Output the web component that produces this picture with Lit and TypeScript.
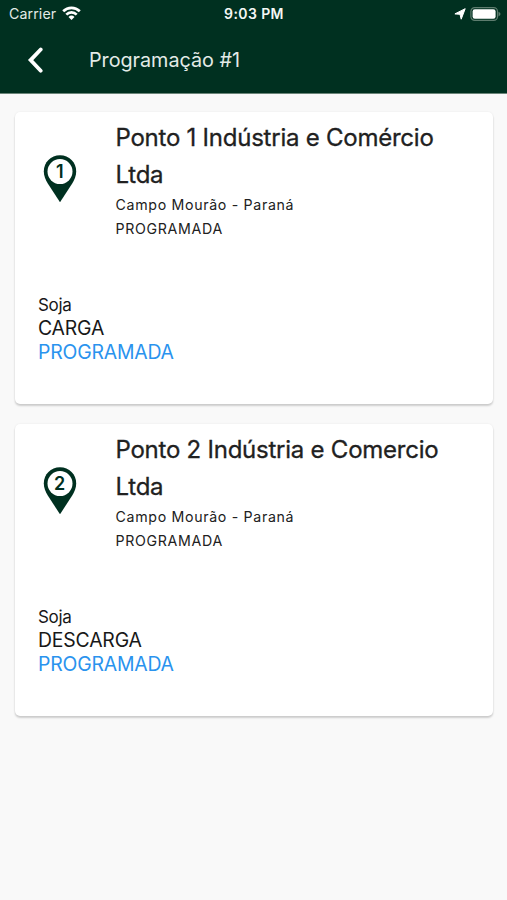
import { LitElement, html, css, svg } from "lit";
import { customElement, property } from "lit/decorators.js";

interface Stop {
  order: number;
  name: string;
  city: string;
  status: string;
  product: string;
  operation: string;
}

const STOPS: Stop[] = [
  { order: 1, name: "Ponto 1 Indústria e Comércio Ltda", city: "Campo Mourão - Paraná", status: "PROGRAMADA", product: "Soja", operation: "CARGA" },
  { order: 2, name: "Ponto 2 Indústria e Comercio Ltda", city: "Campo Mourão - Paraná", status: "PROGRAMADA", product: "Soja", operation: "DESCARGA" },
];

@customElement("status-bar")
class StatusBar extends LitElement {
  static styles = css`
    :host {
      display: grid;
      grid-template-columns: 1fr auto 1fr;
      align-items: center;
      height: 27px;
      padding: 0 6px 0 7px;
      color: #e3ebe7;
    }
    .carrier { display: flex; align-items: center; gap: 5.5px; padding-left: 2px; font-size: 14.2px; letter-spacing: 0.1px; }
    .time { font-size: 14px; font-weight: 600; letter-spacing: 0.4px; color: #f4f7f5; }
    .right { display: flex; align-items: center; justify-content: flex-end; gap: 4px; }
    svg { display: block; }
    .wifi { margin-top: -1px; }
  `;
  render() {
    return html`
      <div class="carrier">
        <span>Carrier</span>
        <svg class="wifi" width="19" height="14" viewBox="0 0 19 14" fill="none" stroke="#fff" stroke-width="2.7">
          <path d="M1.2 5.2a11.8 11.8 0 0 1 16.6 0"></path>
          <path d="M4.3 8.6a7.4 7.4 0 0 1 10.4 0"></path>
          <path d="M9.5 13.9 6.5 10.9a4.3 4.3 0 0 1 6 0z" fill="#fff" stroke="none"></path>
        </svg>
      </div>
      <div class="time">9:03 PM</div>
      <div class="right">
        <svg width="12" height="12" viewBox="0 0 12 12"><path d="M11.2.7 7.2 11.2 6 6.300.9 5.900Z" fill="#fff" stroke="#fff" stroke-width="1" stroke-linejoin="round"></path></svg>
        <svg width="31" height="14" viewBox="0 0 31 14">
          <rect x=".9" y=".6" width="26.6" height="12.8" rx="3.8" fill="none" stroke="#5d7c6e" stroke-width="1.2"></rect>
          <rect x="2.6" y="2.2" width="23" height="9.6" rx="2.2" fill="#fff"></rect>
          <path d="M28.5 4.8q2 .8 2 2.3t-2 2.3z" fill="#5d7c6e"></path>
        </svg>
      </div>
    `;
  }
}

@customElement("app-bar")
class AppBar extends LitElement {
  static styles = css`
    :host { display: flex; align-items: center; height: 66px; padding-left: 27px; color: #e3ebe7; }
    svg { display: block; margin-right: 45px; }
    .title { font-size: 19.8px; line-height: 26px; letter-spacing: -0.03px; }
  `;
  @property() heading = "";
  render() {
    return html`
      <svg width="17" height="26" viewBox="0 0 17 26" fill="none" stroke="#fff" stroke-width="3.8" stroke-linecap="round" stroke-linejoin="miter">
        <path d="M13.7 2.5 3.6 13.1 13.7 23.7"></path>
      </svg>
      <div class="title">${this.heading}</div>
    `;
  }
}

@customElement("stop-card")
class StopCard extends LitElement {
  static styles = css`
    :host {
      display: block;
      box-sizing: border-box;
      height: 292px;
      border-radius: 5px;
      background: #fff;
      box-shadow: 0 2px 2px rgba(0, 0, 0, 0.17), 0 0 2px rgba(0, 0, 0, 0.08);
    }
    .head { display: flex; height: 182px; padding: 8px 23px 0 28px; box-sizing: border-box; }
    .pin { display: block; flex: none; margin: 35px 38.5px 0 0; }
    .num { font: 600 18px Inter, sans-serif; fill: #003020; text-anchor: middle; }
    .name {
      font-size: 24px;
      line-height: 36.5px;
      color: #212121;
      letter-spacing: -0.24px;
      -webkit-text-stroke: 0.3px #212121;
    }
    .sub { font-size: 14.2px; line-height: 24.3px; color: #212121; letter-spacing: 0.67px; }
    .cargo { padding-left: 23px; color: #181818; }
    .product { font-size: 17px; line-height: 22px; letter-spacing: -0.3px; }
    .op { font-size: 19.4px; line-height: 24px; letter-spacing: -0.18px; }
    .blue { color: #2a93ee; }
  `;
  @property({ attribute: false }) stop!: Stop;
  render() {
    const s = this.stop;
    return html`
      <div class="head">
        <svg class="pin" width="34" height="48" viewBox="0 0 34 48">
          <path d="M17 .3C7.8.3.8 7.3.8 16.5c0 4.5 1.8 8.2 4 12.1L17 47.3 29.2 28.6c2.2-3.9 4-7.6 4-12.1C33.2 7.3 26.2.3 17 .3z" fill="#003020"></path>
          <circle cx="17" cy="16.6" r="12.5" fill="#fff"></circle>
          ${svg`<text class="num" x="16.7" y="23.2">${s.order}</text>`}
        </svg>
        <div>
          <div class="name">${s.name}</div>
          <div class="sub">${s.city}</div>
          <div class="sub">${s.status}</div>
        </div>
      </div>
      <div class="cargo">
        <div class="product">${s.product}</div>
        <div class="op">${s.operation}</div>
        <div class="op blue">${s.status}</div>
      </div>
    `;
  }
}

@customElement("app-root")
class AppRoot extends LitElement {
  static styles = css`
    :host {
      display: block;
      height: 900px;
      overflow: hidden;
      background: #f9f9f9;
      font-family: Inter, "Liberation Sans", sans-serif;
    }
    header { background: #003020; border-bottom: 1px solid #6b8579; }
    main { display: flex; flex-direction: column; gap: 20px; padding: 18px 14px 0 15px; }
  `;
  render() {
    return html`
      <header>
        <status-bar></status-bar>
        <app-bar heading="Programação #1"></app-bar>
      </header>
      <main>${STOPS.map((s) => html`<stop-card .stop=${s}></stop-card>`)}</main>
    `;
  }
}
